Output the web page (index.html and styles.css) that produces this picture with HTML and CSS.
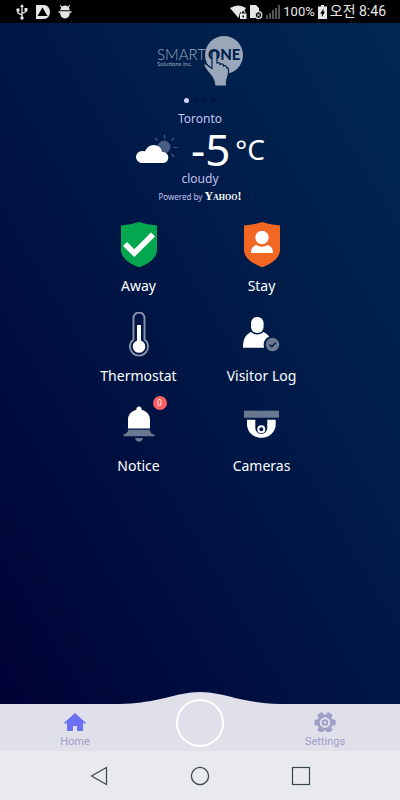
FILE: index.html
```html
<!DOCTYPE html>
<html lang="en">
<head>
    <meta charset="UTF-8">
    <meta name="viewport" content="width=device-width, initial-scale=1.0">
    <title>SmartONE</title>
    <link rel="stylesheet" href="styles.css">
</head>
<body>
    <header class="status-bar">
        <div class="status-group left">
            <svg width="12" height="16" viewBox="0 0 12 16">
                <path d="M6 2v11M6 11L2 9V6M6 9.500l4-2V5" fill="none" stroke="#e6e6e6" stroke-width="1.300"/>
                <path d="M6 0l2 3H4zM0.500 4.500h3v3h-3zM8.500 4h3v3h-3z" fill="#e6e6e6"/>
                <circle cx="6" cy="14" r="1.700" fill="#e6e6e6"/>
            </svg>
            <svg width="14" height="14" viewBox="0 0 14 14">
                <path d="M0 0h8a6 7 0 0 1 0 14H0z" fill="#e6e6e6"/>
                <path d="M6.500 2.500l5 8.500H1.500z" fill="#000"/>
            </svg>
            <svg width="14" height="14" viewBox="0 0 14 14">
                <path d="M2.500 0l1.700 1.500a5 5 0 0 1 5.600 0L11.500 0l.6.5L10.800 2.400 12 5.300H2l1.200-2.900L1.900.5zM.5 6.300h13v1.500h-1.700c0 3.500-2 5.700-4.800 5.700S2.200 11.300 2.200 7.800H.5z" fill="#e6e6e6"/>
            </svg>
        </div>
        <div class="status-group right">
            <svg width="17" height="14" viewBox="0 0 17 14">
                <path d="M0 3q8-5 16 0l-2.500 3.500a3 3 0 0 0-4 3L8.500 13z" fill="#e6e6e6"/>
                <path d="M10 8.500h6.500V14H10z" fill="#e6e6e6"/>
                <path d="M11.500 8.500V7a1.700 1.700 0 0 1 3.400 0v1.500" fill="none" stroke="#e6e6e6"/>
                <path d="M12.500 10.500h1.500v2h-1.500z" fill="#000"/>
            </svg>
            <svg width="13" height="14" viewBox="0 0 13 14">
                <path d="M0 0h6l3 3v3.500L5.500 8v5H0z" fill="#e6e6e6"/>
                <circle cx="8.500" cy="10" r="3.300" fill="#000" stroke="#e6e6e6" stroke-width="1.200"/>
                <path d="M7 8.500l3 3M10 8.500l-3 3" stroke="#e6e6e6"/>
            </svg>
            <svg width="14" height="14" viewBox="0 0 14 14">
                <path d="M0 10h2v4H0zM3 8h2v6H3zM6 5h2v9H6zM9 3h2v11H9zM12 0h2v14h-2z" fill="#555"/>
            </svg>
            <span class="battery-level">100%</span>
            <svg width="9" height="14" viewBox="0 0 9 14">
                <path d="M3 0h3v1.500h3V14H0V1.500h3z" fill="#e6e6e6"/>
                <path d="M5.500 3.500v3.200h1.500L3.800 12V8.500H2.200z" fill="#000"/>
            </svg>
            <span class="clock">오전 8:46</span>
        </div>
    </header>

    <main class="home">
        <svg class="logo" width="86" height="50" viewBox="0 0 86 50" role="img" aria-label="SmartONE Solutions Inc.">
            <circle cx="67" cy="19" r="19" fill="#9aa7ba"/>
            <text class="logo-smart" x="0" y="24">SMART</text>
            <text class="logo-one" x="51" y="24">ONE</text>
            <text class="logo-sub" x="0" y="30">Solutions Inc.</text>
            <path d="M55 17.500c0-3.500 5-3.500 5 0V27q1.500-1 3 .5v1q2-1.300 3.500.5v1q2-.8 3 .8V32q1.500-.5 2 .8V38l-2 7v5H58l-1-5q-2-5-6-9l-4-6q-.5-3 2-2l6 4.500z" fill="#9aa7ba" stroke="#00214b" stroke-width="1.200"/>
        </svg>

        <div class="dots">
            <span class="dot active"></span>
            <span class="dot"></span>
            <span class="dot"></span>
            <span class="dot"></span>
        </div>

        <section class="weather">
            <p class="place">Toronto</p>
            <div class="reading">
                <svg class="weather-icon" width="44" height="32" viewBox="0 0 44 32">
                    <circle cx="29" cy="14" r="6.500" fill="#465c80"/>
                    <path d="M29.500 1.500v4M20 5l2.500 2.700M39 5l-2.500 2.700M38.500 14.500h4M36.500 21l2.700 3" stroke="#465c80" stroke-width="1.200" fill="none"/>
                    <path d="M7 30a6 6 0 0 1 0-12q2 0 3 .3C12 14 15 12 18.500 12c5 0 8 3 8.500 7q6 0 6.300 5.500Q33 30 27 30z" fill="#fff"/>
                </svg>
                <span class="temp">-5</span>
                <span class="unit">°C</span>
            </div>
            <p class="sky">cloudy</p>
            <p class="powered">Powered by <span class="yahoo">Y<small>AHOO</small>!</span></p>
        </section>

        <section class="tiles">
            <button class="tile" type="button">
                <span class="tile-icon">
                    <svg width="46" height="46" viewBox="0 0 46 46">
                        <path d="M5 3.500Q15 3 23 0q8 3 18 3.500V28c0 8-9 14-18 17.300C14 42 5 36 5 28z" fill="#04a650"/>
                        <path d="M7 24l4-4 7.300 7.300L35 10.500l4 4L18.300 35z" fill="#fff"/>
                    </svg>
                </span>
                Away
            </button>
            <button class="tile" type="button">
                <span class="tile-icon">
                    <svg width="46" height="46" viewBox="0 0 46 46">
                        <path d="M5 3.500Q15 3 23 0q8 3 18 3.500V28c0 8-9 14-18 17.300C14 42 5 36 5 28z" fill="#f26722"/>
                        <path d="M12 31c0-5 2.500-7 5-8q6 3.500 12 0c2.500 1 5 3 5 8z" fill="#fff"/>
                        <circle cx="23" cy="15.500" r="7.200" fill="#fff" stroke="#f26722"/>
                    </svg>
                </span>
                Stay
            </button>
            <button class="tile" type="button">
                <span class="tile-icon">
                    <svg width="46" height="46" viewBox="0 0 46 46">
                        <path d="M17.500 27.500V6a5.500 5.500 0 0 1 11 0v21.500a9 9 0 1 1-11 0z" fill="none" stroke="#8994ab" stroke-width="1.900"/>
                        <circle cx="23" cy="34.500" r="6.300" fill="#fff"/>
                        <path d="M21 13h4v20h-4z" fill="#fff"/>
                    </svg>
                </span>
                Thermostat
            </button>
            <button class="tile" type="button">
                <span class="tile-icon">
                    <svg width="46" height="46" viewBox="0 0 46 46">
                        <rect x="12" y="5" width="12.600" height="16" rx="6" fill="#fff"/>
                        <path d="M4 35.700C4 26 7 22.500 12 20q6 5 12.500 0 4 2 5.800 4.500a8.500 8.500 0 0 0-5 11.200z" fill="#fff"/>
                        <circle cx="33.500" cy="32.500" r="6.800" fill="#6b7892"/>
                        <path d="M30.500 32.500l2.300 2.300 4-4" fill="none" stroke="#001a46" stroke-width="1.500"/>
                    </svg>
                </span>
                Visitor Log
            </button>
            <button class="tile" type="button">
                <span class="tile-icon">
                    <svg width="46" height="46" viewBox="0 0 46 46">
                        <path d="M12 26.500V18C12 12 16 9 20.500 7.800a2.600 2.600 0 1 1 5 0C30 9 34 12 34 18v8.500z" fill="#fff"/>
                        <path d="M12 27.700h22v1.500q1 3 4.500 3.500v1.600h-31v-1.600Q11 32 12 29zM19 36h8q-1 3.700-4 3.700T19 36z" fill="#6b7892"/>
                    </svg>
                    <span class="badge">0</span>
                </span>
                Notice
            </button>
            <button class="tile" type="button">
                <span class="tile-icon">
                    <svg width="46" height="46" viewBox="0 0 46 46">
                        <rect x="5" y="8.700" width="35" height="7" fill="#6b7892"/>
                        <path d="M8 17.700h8.300v8.300a6 6 0 0 0 12 0v-8.300h8.400V22c0 8-6 13.700-14.300 13.700S8 30 8 22z" fill="#fff"/>
                        <circle cx="22.300" cy="27.300" r="3" fill="none" stroke="#fff" stroke-width="2"/>
                    </svg>
                </span>
                Cameras
            </button>
        </section>
    </main>

    <nav class="tab-bar">
        <svg class="wave" width="160" height="12" viewBox="0 0 160 12">
            <path d="M0 12C32 11 46 5 62 2Q80-2 98 2c16 3 30 9 62 10z" fill="#e0e0eb"/>
        </svg>
        <a class="tab" href="#home">
            <svg width="22" height="20" viewBox="0 0 22 20">
                <path d="M11 1l11 10-1.200 1L19 10.500V19h-6v-5H9v5H3v-8.500L1.200 12 0 11z" fill="#6b70f5"/>
            </svg>
            Home
        </a>
        <button class="main-button" type="button" aria-label="Main"></button>
        <a class="tab" href="#settings">
            <svg width="22" height="20" viewBox="0 0 22 20">
                <g fill="#9d9fc4">
                    <circle cx="11" cy="10.500" r="8"/>
                    <rect x="0.300" y="7.500" width="21.400" height="6" rx="1.500"/>
                    <rect x="0.300" y="7.500" width="21.400" height="6" rx="1.500" transform="rotate(60 11 10.500)"/>
                    <rect x="0.300" y="7.500" width="21.400" height="6" rx="1.500" transform="rotate(120 11 10.500)"/>
                </g>
                <circle cx="11" cy="10.500" r="4.300" fill="none" stroke="#e0e0eb" stroke-width="2"/>
                <circle cx="11" cy="10.500" r="1.300" fill="#e0e0eb"/>
            </svg>
            Settings
        </a>
    </nav>

    <footer class="system-nav">
        <button type="button" aria-label="Back">
            <svg width="20" height="20" viewBox="0 0 20 20"><path d="M17.500 1.500v17L2.500 10z" fill="none" stroke="#37474f" stroke-width="1.200"/></svg>
        </button>
        <button type="button" aria-label="Home screen">
            <svg width="20" height="20" viewBox="0 0 20 20"><circle cx="10" cy="10" r="8.600" fill="none" stroke="#37474f" stroke-width="1.300"/></svg>
        </button>
        <button type="button" aria-label="Recent apps">
            <svg width="20" height="20" viewBox="0 0 20 20"><rect x="1.500" y="1.500" width="17" height="17" fill="none" stroke="#37474f" stroke-width="1.200"/></svg>
        </button>
    </footer>
</body>
</html>
```

FILE: styles.css
```css
* {
    box-sizing: border-box;
}

body {
    margin: 0;
    min-height: 100vh;
    display: flex;
    flex-direction: column;
    font-family: "Noto Sans", "Noto Sans CJK KR", sans-serif;
    color: #fff;
}

svg {
    display: block;
}

p {
    margin: 0;
}

button {
    padding: 0;
    border: none;
    background: none;
    font: inherit;
    color: inherit;
    cursor: pointer;
}

/* status bar */
.status-bar {
    display: flex;
    justify-content: space-between;
    height: 23px;
    padding: 0 14px 0 16px;
    background: #000;
    color: #e6e6e6;
    font-family: Roboto, "Noto Sans CJK KR", sans-serif;
    font-size: 14px;
    line-height: 23px;
}

.status-group {
    display: flex;
    align-items: center;
}

.left {
    gap: 8px;
}

.right {
    gap: 3px;
}

.battery-level {
    font-size: 13px;
}

/* home screen */
.home {
    flex: 1;
    display: flex;
    flex-direction: column;
    align-items: center;
    padding: 13px 0 16px;
    background: linear-gradient(to top right, #000236, #001645 48%, #002952);
}

.logo text {
    font-family: Lato, sans-serif;
    fill: #9aa7ba;
}

.logo .logo-smart {
    font-size: 15px;
    font-weight: 300;
}

.logo .logo-one {
    font-size: 15px;
    font-weight: 900;
    fill: #00214b;
}

.logo .logo-sub {
    font-size: 6px;
}

.dots {
    display: flex;
    gap: 4px;
    margin-top: 12px;
}

.dot {
    width: 5px;
    height: 5px;
    border-radius: 50%;
    background: #00133f;
}

.dot.active {
    background: #d4d2ff;
}

.weather {
    margin-top: 7px;
    text-align: center;
    color: #c3c1f0;
}

.place,
.sky {
    font-size: 12px;
    line-height: 18px;
}

.reading {
    display: flex;
    align-items: center;
    height: 42px;
    color: #fff;
}

.temp {
    margin-left: 12px;
    font-size: 44px;
    line-height: 42px;
}

.unit {
    margin-left: 5px;
    font-size: 28px;
    line-height: 42px;
}

.powered {
    font-size: 8px;
    line-height: 16px;
}

.yahoo {
    font-family: "Liberation Serif", serif;
    font-size: 12px;
    font-weight: bold;
    color: #fff;
}

.yahoo small {
    font-size: 8px;
}

/* tiles */
.tiles {
    display: grid;
    grid-template-columns: repeat(2, 123px);
    margin-top: 10px;
}

.tile {
    display: flex;
    flex-direction: column;
    align-items: center;
    height: 90px;
    font-size: 14px;
    line-height: 24px;
}

.tile-icon {
    position: relative;
    padding: 6px 0;
}

.badge {
    position: absolute;
    top: 0;
    right: -5px;
    width: 14px;
    height: 14px;
    border-radius: 50%;
    background: #f85f60;
    font-size: 8px;
    line-height: 14px;
}

/* bottom tabs */
.tab-bar {
    position: relative;
    display: grid;
    grid-template-columns: 3fr 2fr 3fr;
    justify-items: center;
    height: 47px;
    background: #e0e0eb;
}

.wave {
    position: absolute;
    bottom: 100%;
    left: 50%;
    transform: translateX(-50%);
}

.tab {
    display: flex;
    flex-direction: column;
    align-items: center;
    padding-top: 8px;
    font-family: Roboto, sans-serif;
    font-size: 11px;
    line-height: 19px;
    color: #9d9fc4;
    text-decoration: none;
}

.main-button {
    position: relative;
    width: 48px;
    height: 48px;
    margin-top: -5px;
    border: 2px solid #fff;
    border-radius: 50%;
}

/* android buttons */
.system-nav {
    display: grid;
    grid-template-columns: repeat(3, 1fr);
    justify-items: center;
    height: 49px;
    padding: 0 12%;
    background: #e9eaee;
}
```
